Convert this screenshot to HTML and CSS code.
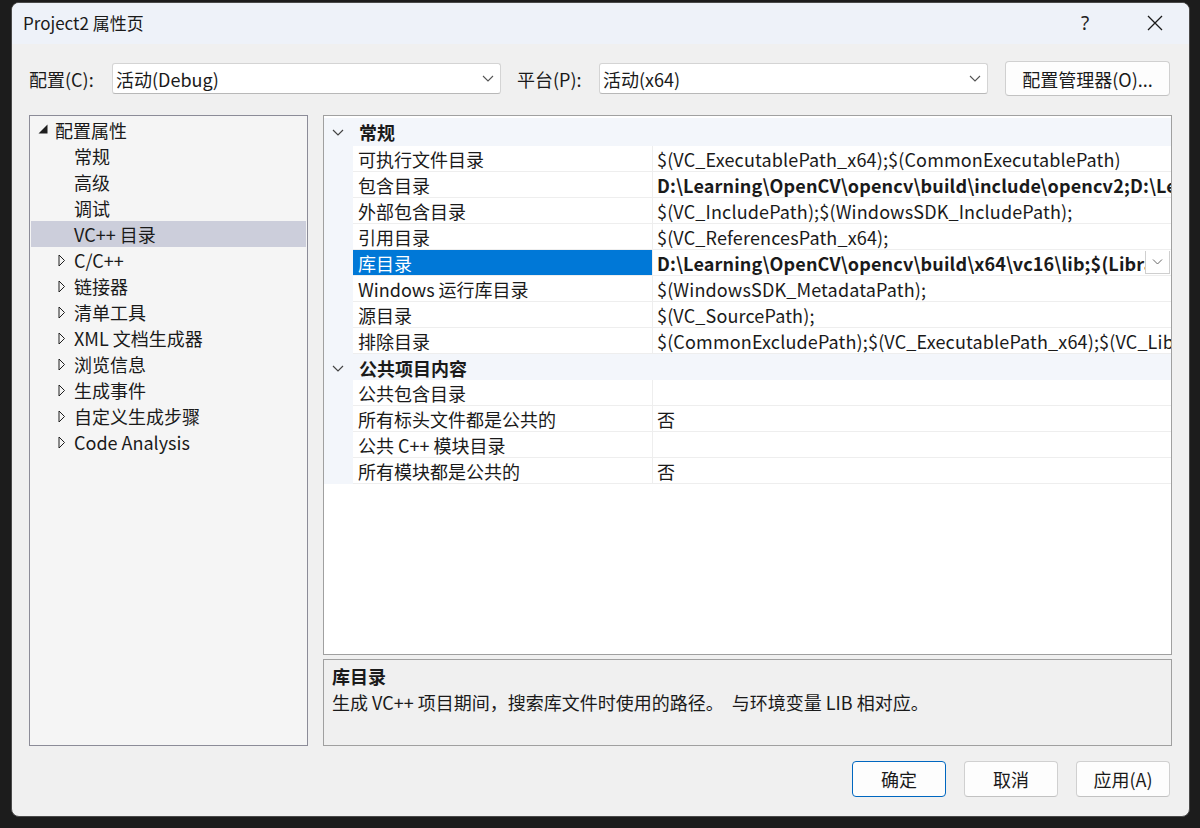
FILE: index.html
```html
<!DOCTYPE html>
<html lang="zh-CN">
<head>
	<meta charset="UTF-8">
	<title>Project2 属性页</title>
	<link rel="stylesheet" href="styles.css">
</head>
<body>
	<div class="window">
		<div class="titlebar">
			<span class="title">Project2 属性页</span>
			<span class="help">?</span>
			<span class="close">
				<svg width="16" height="16" viewBox="0 0 16 16"><path d="M1 1L15 15M15 1L1 15" stroke="#1a1a1a" stroke-width="1.3" fill="none"/></svg>
			</span>
		</div>

		<div class="config-row">
			<label class="lbl lbl-cfg">配置(C):</label>
			<div class="combo">
				<span>活动(Debug)</span>
				<svg width="12" height="7" viewBox="0 0 12 7"><polyline points="1,1 6,6 11,1" stroke="#555" stroke-width="1.1" fill="none"/></svg>
			</div>
			<label class="lbl lbl-plat">平台(P):</label>
			<div class="combo">
				<span>活动(x64)</span>
				<svg width="12" height="7" viewBox="0 0 12 7"><polyline points="1,1 6,6 11,1" stroke="#555" stroke-width="1.1" fill="none"/></svg>
			</div>
			<button class="btn btn-mgr">配置管理器(O)...</button>
		</div>

		<div class="main">
			<!-- 左侧树 -->
			<div class="tree">
				<div class="node root">
					<span class="twist"><svg width="10" height="10" viewBox="0 0 10 10"><polygon points="9.5,0.5 9.5,9.5 0.5,9.5" fill="#1e1e1e"/></svg></span>配置属性
				</div>
				<div class="node child"><span class="twist"></span>常规</div>
				<div class="node child"><span class="twist"></span>高级</div>
				<div class="node child"><span class="twist"></span>调试</div>
				<div class="node child sel"><span class="twist"></span>VC++ 目录</div>
				<div class="node child"><span class="twist"><svg class="exp" width="8" height="13" viewBox="0 0 8 13"><polygon points="1,1 6.5,6.5 1,12" stroke="#1e1e1e" stroke-width="1" fill="none"/></svg></span>C/C++</div>
				<div class="node child"><span class="twist"><svg class="exp" width="8" height="13" viewBox="0 0 8 13"><polygon points="1,1 6.5,6.5 1,12" stroke="#1e1e1e" stroke-width="1" fill="none"/></svg></span>链接器</div>
				<div class="node child"><span class="twist"><svg class="exp" width="8" height="13" viewBox="0 0 8 13"><polygon points="1,1 6.5,6.5 1,12" stroke="#1e1e1e" stroke-width="1" fill="none"/></svg></span>清单工具</div>
				<div class="node child"><span class="twist"><svg class="exp" width="8" height="13" viewBox="0 0 8 13"><polygon points="1,1 6.5,6.5 1,12" stroke="#1e1e1e" stroke-width="1" fill="none"/></svg></span>XML 文档生成器</div>
				<div class="node child"><span class="twist"><svg class="exp" width="8" height="13" viewBox="0 0 8 13"><polygon points="1,1 6.5,6.5 1,12" stroke="#1e1e1e" stroke-width="1" fill="none"/></svg></span>浏览信息</div>
				<div class="node child"><span class="twist"><svg class="exp" width="8" height="13" viewBox="0 0 8 13"><polygon points="1,1 6.5,6.5 1,12" stroke="#1e1e1e" stroke-width="1" fill="none"/></svg></span>生成事件</div>
				<div class="node child"><span class="twist"><svg class="exp" width="8" height="13" viewBox="0 0 8 13"><polygon points="1,1 6.5,6.5 1,12" stroke="#1e1e1e" stroke-width="1" fill="none"/></svg></span>自定义生成步骤</div>
				<div class="node child"><span class="twist"><svg class="exp" width="8" height="13" viewBox="0 0 8 13"><polygon points="1,1 6.5,6.5 1,12" stroke="#1e1e1e" stroke-width="1" fill="none"/></svg></span>Code Analysis</div>
			</div>

			<div class="right">
				<!-- 属性表格 -->
				<div class="grid">
					<div class="group">
						<div class="group-head first">
							<span class="chev"><svg width="12" height="7" viewBox="0 0 12 7"><polyline points="1,1 6,6 11,1" stroke="#444" stroke-width="1.2" fill="none"/></svg></span>常规
						</div>
						<div class="prop"><div class="pname">可执行文件目录</div><div class="pval">$(VC_ExecutablePath_x64);$(CommonExecutablePath)</div></div>
						<div class="prop"><div class="pname">包含目录</div><div class="pval bold">D:\Learning\OpenCV\opencv\build\include\opencv2;D:\Learning\OpenCV\opencv\build\include;$(IncludePath)</div></div>
						<div class="prop"><div class="pname">外部包含目录</div><div class="pval">$(VC_IncludePath);$(WindowsSDK_IncludePath);</div></div>
						<div class="prop"><div class="pname">引用目录</div><div class="pval">$(VC_ReferencesPath_x64);</div></div>
						<div class="prop active"><div class="pname">库目录</div><div class="pval bold"><span class="vtext">D:\Learning\OpenCV\opencv\build\x64\vc16\lib;$(LibraryPath)</span><span class="dd"><svg width="11" height="6" viewBox="0 0 11 6"><polyline points="1,0.5 5.5,5 10,0.5" stroke="#666" stroke-width="1" fill="none"/></svg></span></div></div>
						<div class="prop"><div class="pname">Windows 运行库目录</div><div class="pval">$(WindowsSDK_MetadataPath);</div></div>
						<div class="prop"><div class="pname">源目录</div><div class="pval">$(VC_SourcePath);</div></div>
						<div class="prop"><div class="pname">排除目录</div><div class="pval">$(CommonExcludePath);$(VC_ExecutablePath_x64);$(VC_LibraryPath_x64)</div></div>
					</div>
					<div class="group">
						<div class="group-head">
							<span class="chev"><svg width="12" height="7" viewBox="0 0 12 7"><polyline points="1,1 6,6 11,1" stroke="#444" stroke-width="1.2" fill="none"/></svg></span>公共项目内容
						</div>
						<div class="prop"><div class="pname">公共包含目录</div><div class="pval"></div></div>
						<div class="prop"><div class="pname">所有标头文件都是公共的</div><div class="pval">否</div></div>
						<div class="prop"><div class="pname">公共 C++ 模块目录</div><div class="pval"></div></div>
						<div class="prop"><div class="pname">所有模块都是公共的</div><div class="pval">否</div></div>
					</div>
				</div>
				<!-- 说明 -->
				<div class="desc">
					<div class="desc-title">库目录</div>
					<div class="desc-text">生成 VC++ 项目期间，搜索库文件时使用的路径。&nbsp;&nbsp;与环境变量 LIB 相对应。</div>
				</div>
			</div>
		</div>

		<div class="buttons">
			<button class="btn btn-dlg default">确定</button>
			<button class="btn btn-dlg">取消</button>
			<button class="btn btn-dlg">应用(A)</button>
		</div>
	</div>
</body>
</html>
```

FILE: styles.css
```css
html, body {
	margin: 0;
	padding: 0;
}
body {
	background: #1c1c1c;
	height: 828px;
	overflow: hidden;
	font-family: "Noto Sans CJK SC", "Noto Sans", sans-serif;
	font-size: 18px;
	color: #1a1a1a;
}
.window {
	margin: 2px 0 0 11px;
	width: 1177px;
	height: 813px;
	border: 1px solid #4a4a4a;
	border-radius: 8px;
	background: #f0f0f0;
	overflow: hidden;
	display: flex;
	flex-direction: column;
}
/* 标题栏 */
.titlebar {
	height: 41px;
	flex: none;
	background: #eef2f9;
	display: flex;
	align-items: center;
	padding-left: 11px;
}
.title {
	font-size: 17px;
	line-height: 20px;
	flex: 1;
	padding-bottom: 2px;
}
.help {
	font-family: "Noto Sans", sans-serif;
	font-size: 19px;
	width: 20px;
	text-align: center;
	margin-right: 52px;
	color: #222;
	padding-bottom: 2px;
}
.close {
	width: 16px;
	height: 16px;
	margin-right: 26px;
	margin-bottom: 2px;
}
.close svg {
	display: block;
}
/* 配置行 */
.config-row {
	flex: none;
	display: flex;
	align-items: center;
	height: 35px;
	margin: 17px 19px 0 17px;
}
.lbl {
	line-height: 30px;
	flex: none;
}
.lbl-cfg {
	width: 83px;
}
.lbl-plat {
	width: 82px;
	margin-left: 16px;
}
.combo {
	box-sizing: border-box;
	flex: none;
	width: 389px;
	height: 31px;
	background: #fff;
	border: 1px solid #d4d4d4;
	border-bottom-color: #b8b8b8;
	border-radius: 3px;
	display: flex;
	align-items: center;
	justify-content: space-between;
	padding: 0 6px 0 3px;
	line-height: 28px;
}
.btn {
	font-family: "Noto Sans CJK SC", "Noto Sans", sans-serif;
	font-size: 18px;
	color: #1a1a1a;
	background: #fdfdfd;
	border: 1px solid #d0d0d0;
	border-bottom-color: #c2c2c2;
	border-radius: 4px;
	padding: 0;
	line-height: 24px;
	box-sizing: border-box;
	flex: none;
}
.btn-mgr {
	width: 165px;
	height: 35px;
	margin-left: 17px;
}
/* 主区域 */
.main {
	flex: none;
	display: flex;
	gap: 15px;
	height: 631px;
	margin: 19px 17px 0 17px;
}
.tree {
	box-sizing: border-box;
	flex: none;
	width: 279px;
	border: 1px solid #8c8c98;
	background: #f5f5f5;
	padding-top: 1px;
}
.node {
	height: 26px;
	line-height: 26px;
	display: flex;
	align-items: center;
	white-space: nowrap;
}
.twist {
	display: flex;
	align-items: center;
	flex: none;
}
.root {
	padding-left: 8px;
}
.root .twist {
	width: 17px;
	padding-bottom: 2px;
}
.child {
	padding-left: 28px;
}
.child .twist {
	width: 16px;
}
.sel {
	background: #cccedb;
	margin: 0 1px;
	padding-left: 27px;
}
.right {
	flex: 1;
	min-width: 0;
	display: flex;
	flex-direction: column;
	gap: 4px;
}
.grid {
	box-sizing: border-box;
	height: 540px;
	flex: none;
	border: 1px solid #a0a0a0;
	background: #fff;
	padding-top: 2px;
	overflow: hidden;
}
.group {
	background: #f3f6fb;
}
.group-head {
	height: 26px;
	line-height: 26px;
	font-weight: bold;
	display: flex;
	align-items: center;
	padding-top: 2px;
	box-sizing: border-box;
}
.group-head.first {
	height: 28px;
	padding-top: 0;
}
.chev {
	width: 35px;
	display: flex;
	justify-content: center;
	padding-left: 2px;
	box-sizing: border-box;
	padding-right: 10px;
}
.prop {
	margin-left: 29px;
	height: 26px;
	display: flex;
	background: #fff;
	box-sizing: border-box;
	border-bottom: 1px solid #eeeeee;
	line-height: 25px;
	padding-top: 1px;
}
.pname {
	box-sizing: border-box;
	width: 300px;
	flex: none;
	padding-left: 5px;
	border-right: 1px solid #eeeeee;
	white-space: nowrap;
	overflow: hidden;
	margin-top: -1px;
	padding-top: 1px;
}
.pval {
	flex: 1;
	min-width: 0;
	padding-left: 4px;
	white-space: nowrap;
	overflow: hidden;
	display: flex;
	letter-spacing: 0.15px;
}
.bold {
	font-weight: bold;
}
.active .pname {
	background: #0078d7;
	color: #fff;
}
.vtext {
	flex: 1;
	min-width: 0;
	overflow: hidden;
}
.dd {
	flex: none;
	box-sizing: border-box;
	width: 25px;
	height: 24px;
	margin: -1px 1px 0 0;
	background: #fff;
	border: 1px solid #cfcfcf;
	display: flex;
	align-items: center;
	justify-content: center;
}
.desc {
	flex: 1;
	box-sizing: border-box;
	border: 1px solid #a0a0a0;
	background: #f0f0f0;
	padding: 3px 8px 0 8px;
}
.desc-title {
	font-weight: bold;
	line-height: 26px;
}
.desc-text {
	line-height: 26px;
}
/* 底部按钮 */
.buttons {
	flex: none;
	display: flex;
	justify-content: flex-end;
	gap: 18px;
	margin: 15px 19px 0 0;
}
.btn-dlg {
	width: 94px;
	height: 36px;
}
.default {
	border: 1px solid #0067c0;
}
```
